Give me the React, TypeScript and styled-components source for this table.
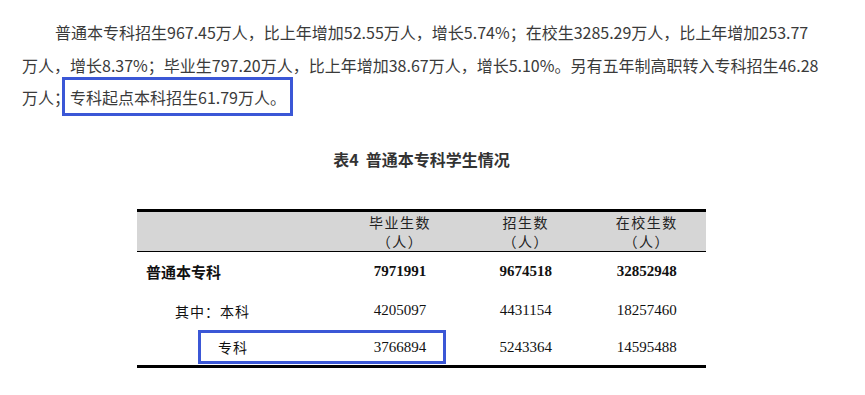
import React from "react";
import styled, { createGlobalStyle } from "styled-components";

const Global = createGlobalStyle`
  html, body { margin: 0; padding: 0; background: #fff; }
  body { font-family: "Noto Sans CJK SC", "Noto Sans", sans-serif; }
`;

const Page = styled.div`
  width: 865px;
  height: 395px;
  overflow: hidden;
  padding: 16px 0 0 22px;
  box-sizing: border-box;
`;

const Paragraph = styled.p`
  margin: 0;
  width: 800px;
  font-size: 16px;
  line-height: 32.5px;
  color: #3a3a3a;
  text-indent: 33px;
`;

const Marked = styled.span`
  position: relative;
  &::after {
    content: "";
    position: absolute;
    left: -8px;
    right: -7px;
    top: -8px;
    bottom: -7px;
    border: 3px solid #3b57d6;
    pointer-events: none;
  }
`;

const TableBlock = styled.div`
  width: 569px;
  margin: 33px 0 0 115px;
  display: flex;
  flex-direction: column;
`;

const Title = styled.div`
  text-align: center;
  font-size: 16px;
  font-weight: 700;
  line-height: 24px;
  color: #333;
  margin-bottom: 38px;
`;

const Grid = styled.div`
  display: grid;
  grid-template-columns: 199px 128px 123.5px 118.5px;
  border-top: 3px solid #000;
  border-bottom: 3px solid #000;
`;

const HeadCell = styled.div`
  background: #d6d6d6;
  height: 40px;
  padding-top: 1px;
  box-sizing: border-box;
  border-bottom: 1px solid #000;
  display: flex;
  flex-direction: column;
  align-items: center;
  font-size: 14px;
  line-height: 19px;
  letter-spacing: 1.5px;
  color: #222;
`;

const Row = styled.div<{ $h: number }>`
  display: contents;
  & > div { height: ${(p) => p.$h}px; }
`;

const Label = styled.div<{ $indent: number; $bold?: boolean; $mark?: boolean }>`
  position: relative;
  display: flex;
  align-items: center;
  padding-left: ${(p) => p.$indent}px;
  font-size: ${(p) => (p.$bold ? 15 : 14)}px;
  font-weight: ${(p) => (p.$bold ? 700 : 400)};
  letter-spacing: ${(p) => (p.$bold ? 0 : 1)}px;
  color: #111;
  ${(p) =>
    p.$mark &&
    `&::after {
      content: "";
      position: absolute;
      left: 61px;
      top: 0;
      width: 248px;
      height: 34px;
      box-sizing: border-box;
      border: 3px solid #3b57d6;
      z-index: 1;
    }`}
`;

const Num = styled.div<{ $bold?: boolean }>`
  display: flex;
  align-items: center;
  justify-content: center;
  font-family: "Liberation Serif", "Times New Roman", serif;
  font-size: 15px;
  font-weight: ${(p) => (p.$bold ? 700 : 400)};
  color: #111;
`;

const rows = [
  { label: "普通本专科", indent: 9, bold: true, h: 40, nums: ["7971991", "9674518", "32852948"] },
  { label: "其中：本科", indent: 38, h: 38, nums: ["4205097", "4431154", "18257460"] },
  { label: "专科", indent: 81, h: 35, mark: true, nums: ["3766894", "5243364", "14595488"] },
];

export default function App() {
  return (
    <>
      <Global />
      <Page>
        <Paragraph>
          普通本专科招生967.45万人，比上年增加52.55万人，增长5.74%；在校生3285.29万人，比上年增加253.77万人，增长8.37%；毕业生797.20万人，比上年增加38.67万人，增长5.10%。另有五年制高职转入专科招生46.28万人；
          <Marked>专科起点本科招生61.79万人。</Marked>
        </Paragraph>
        <TableBlock>
          <Title>表4&nbsp;&nbsp;普通本专科学生情况</Title>
          <Grid>
            <HeadCell />
            <HeadCell>
              <span>毕业生数</span>
              <span>（人）</span>
            </HeadCell>
            <HeadCell>
              <span>招生数</span>
              <span>（人）</span>
            </HeadCell>
            <HeadCell>
              <span>在校生数</span>
              <span>（人）</span>
            </HeadCell>
            {rows.map((r) => (
              <Row key={r.label} $h={r.h}>
                <Label $indent={r.indent} $bold={r.bold} $mark={r.mark}>
                  {r.label}
                </Label>
                {r.nums.map((n) => (
                  <Num key={n} $bold={r.bold}>
                    {n}
                  </Num>
                ))}
              </Row>
            ))}
          </Grid>
        </TableBlock>
      </Page>
    </>
  );
}
